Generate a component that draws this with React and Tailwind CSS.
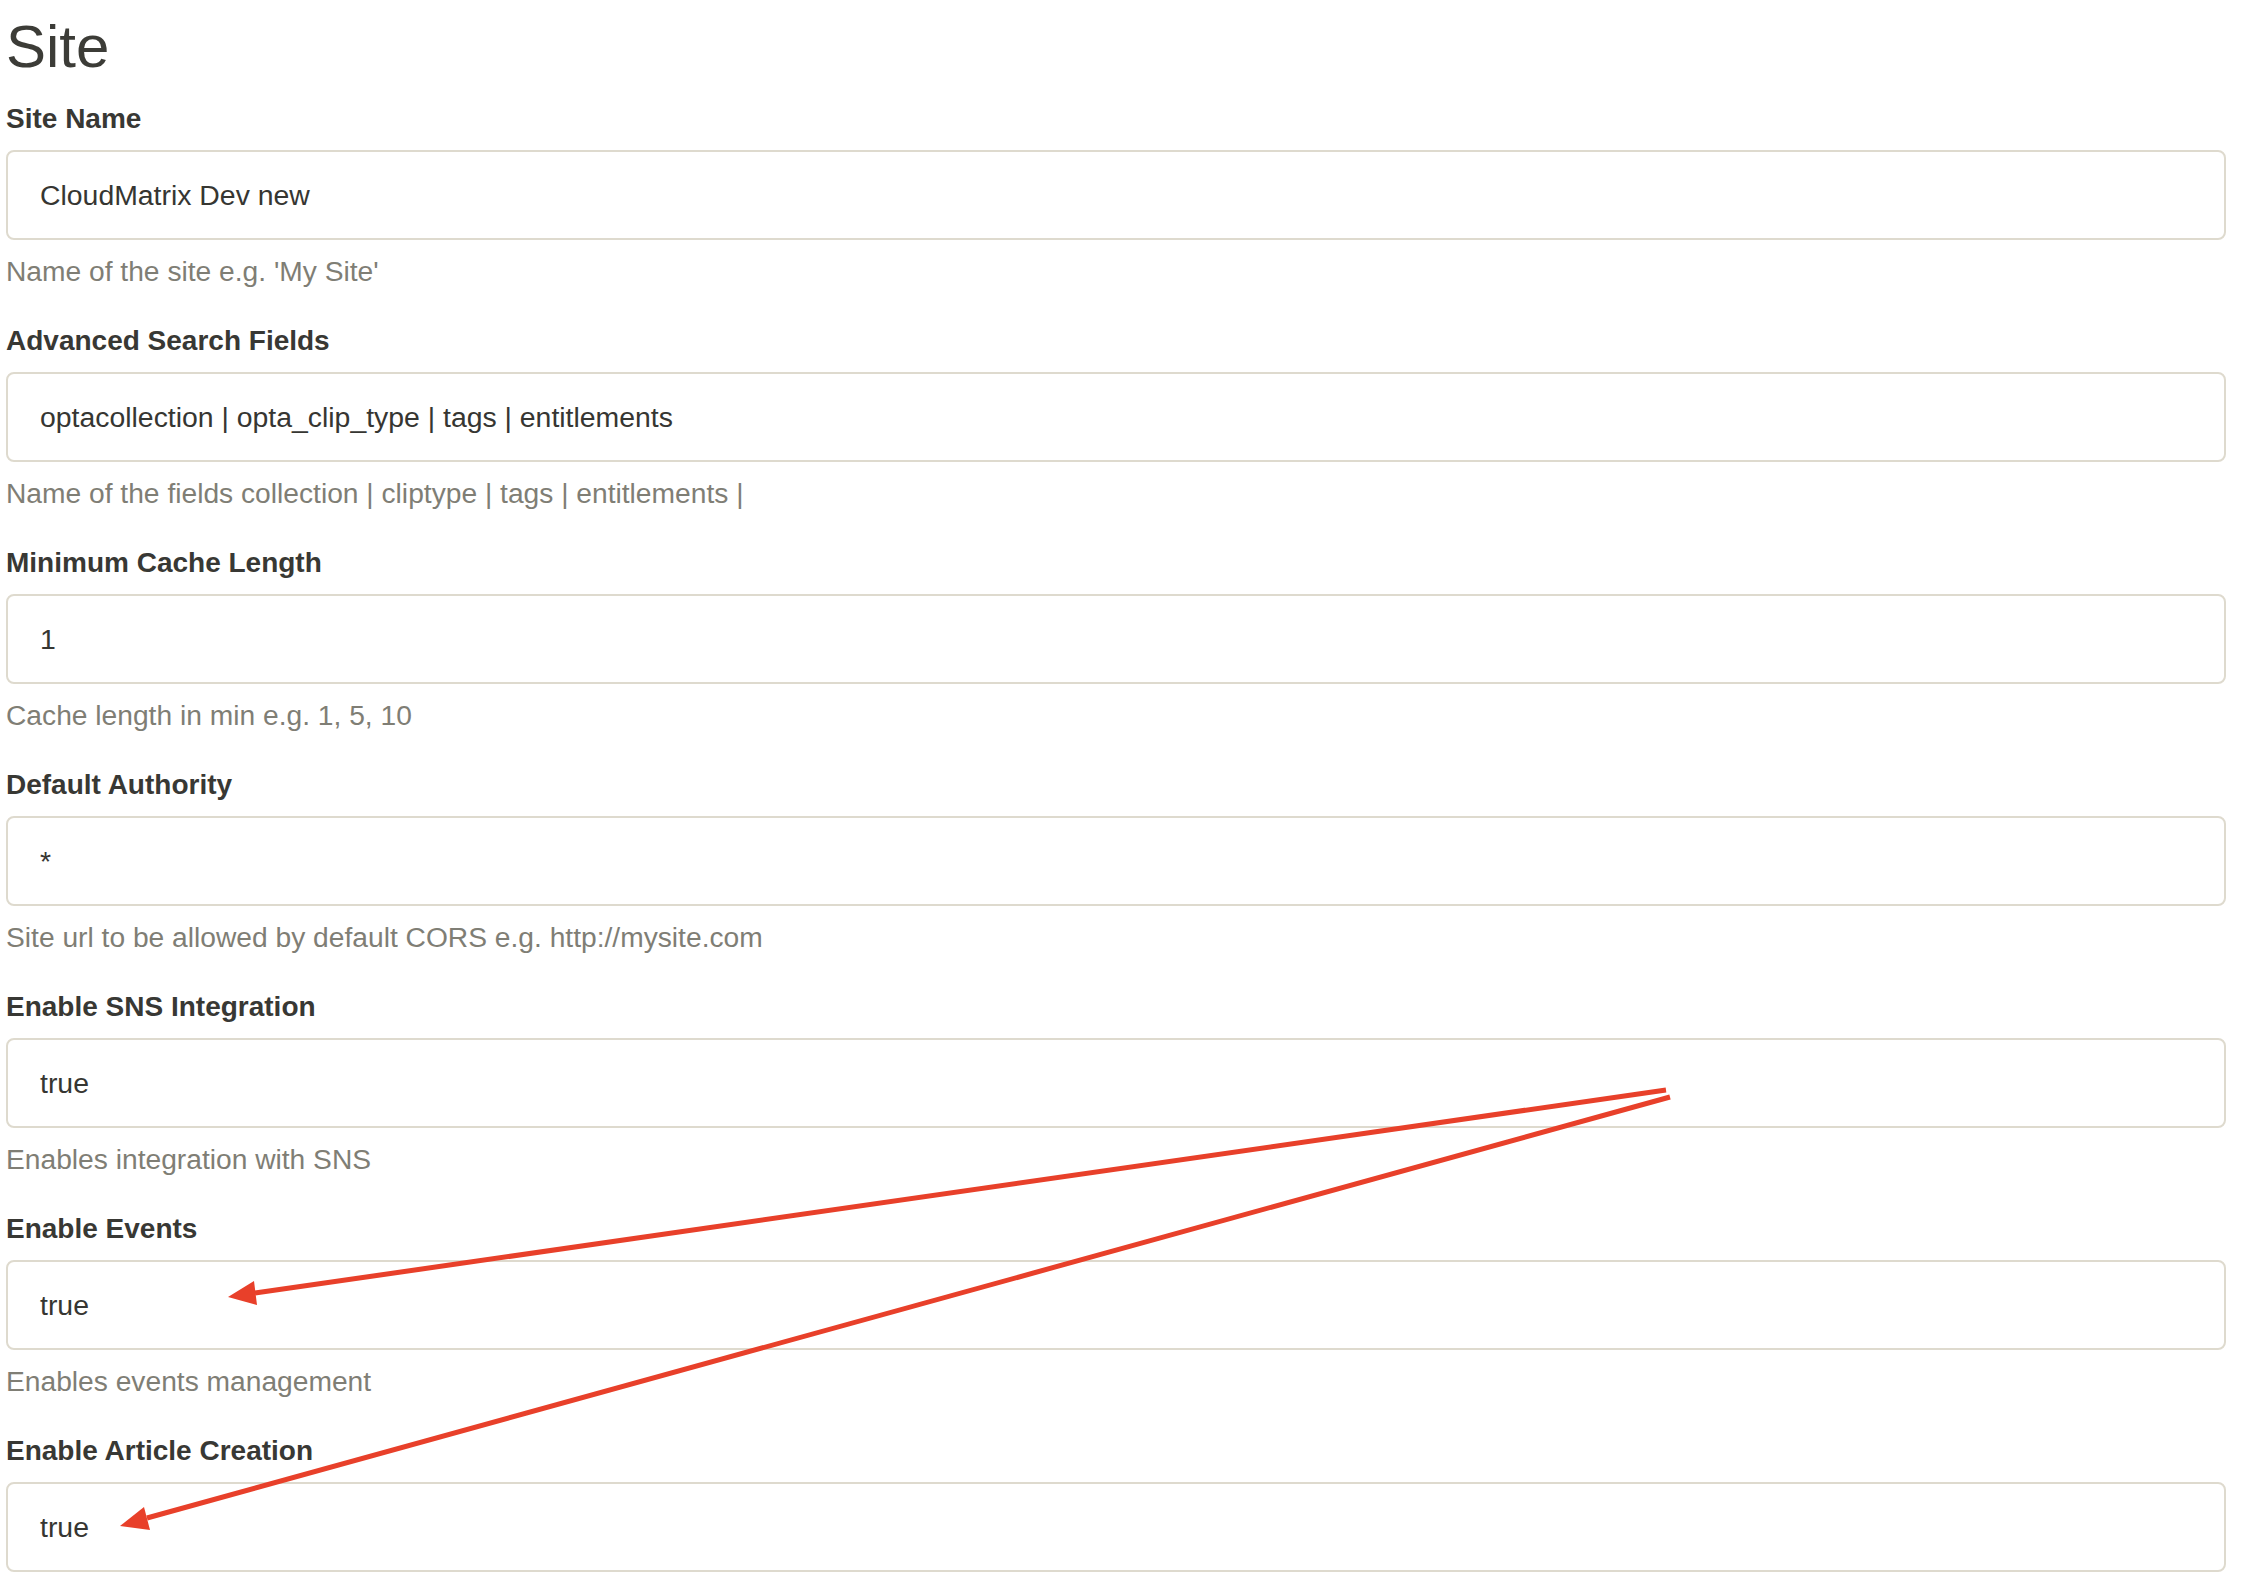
import React from 'react';

const fields = [
  { label: 'Site Name', value: 'CloudMatrix Dev new', help: "Name of the site e.g. 'My Site'" },
  { label: 'Advanced Search Fields', value: 'optacollection | opta_clip_type | tags | entitlements', help: 'Name of the fields collection | cliptype | tags | entitlements |' },
  { label: 'Minimum Cache Length', value: '1', help: 'Cache length in min e.g. 1, 5, 10' },
  { label: 'Default Authority', value: '*', help: 'Site url to be allowed by default CORS e.g. http://mysite.com' },
  { label: 'Enable SNS Integration', value: 'true', help: 'Enables integration with SNS' },
  { label: 'Enable Events', value: 'true', help: 'Enables events management' },
  { label: 'Enable Article Creation', value: 'true', help: null },
];

export default function App() {
  return (
    <div
      className="relative min-h-[1582px] bg-white pl-[6px] pr-[16px] pt-[14px] overflow-hidden"
      style={{ fontFamily: '"Liberation Sans", Arial, sans-serif' }}
    >
      <h1 className="text-[60px] leading-[66px] text-[#3c3c37] mb-[19px]">Site</h1>

      {fields.map(f => (
        <Field key={f.label} {...f} />
      ))}

      {/* red annotation arrows */}
      <svg className="absolute left-0 top-0 pointer-events-none" width="2242" height="1582">
        <line x1="1666" y1="1090" x2="255" y2="1293" stroke="#e8402a" strokeWidth="5" />
        <polygon points="228,1297 254,1281 257,1305" fill="#e8402a" />
        <line x1="1670" y1="1097" x2="147" y2="1518" stroke="#e8402a" strokeWidth="5" />
        <polygon points="120,1526 144,1507 150,1530" fill="#e8402a" />
      </svg>
    </div>
  );
}

function Field({ label, value, help }) {
  return (
    <div className="mb-[30px]">
      <label className="block text-[28px] leading-[40px] font-bold text-[#383834] mb-[11px]">{label}</label>
      <div className="flex items-center h-[90px] border-2 border-[#dedace] rounded-lg pl-[32px] text-[28.4px] leading-[40px] text-[#363632]">
        {value}
      </div>
      {help && (
        <p className="mt-[11px] text-[28.2px] leading-[40px] text-[#7f7e75]">{help}</p>
      )}
    </div>
  );
}
